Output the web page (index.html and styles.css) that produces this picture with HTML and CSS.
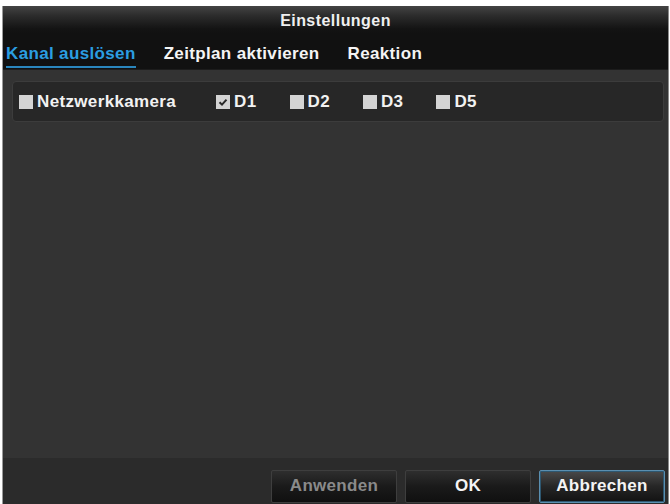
FILE: index.html
```html
<!DOCTYPE html>
<html lang="de">
<head>
<meta charset="utf-8">
<title>Einstellungen</title>
<link rel="stylesheet" href="styles.css">
</head>
<body>
<div class="window">
  <div class="titlebar">Einstellungen</div>
  <div class="tabs">
    <span class="tab active">Kanal auslösen</span>
    <span class="tab">Zeitplan aktivieren</span>
    <span class="tab">Reaktion</span>
  </div>
  <div class="content">
    <div class="panel">
      <label class="cb wide"><span class="box"></span>Netzwerkkamera</label>
      <label class="cb"><span class="box checked"><svg viewBox="0 0 14 14" width="14" height="14"><path d="M3.5 7.2 L6 9.6 L10.5 4.6" fill="none" stroke="#2a2a2a" stroke-width="2"/></svg></span>D1</label>
      <label class="cb"><span class="box"></span>D2</label>
      <label class="cb"><span class="box"></span>D3</label>
      <label class="cb"><span class="box"></span>D5</label>
    </div>
  </div>
  <div class="footer">
    <button class="btn disabled">Anwenden</button>
    <button class="btn">OK</button>
    <button class="btn focus">Abbrechen</button>
  </div>
</div>
</body>
</html>
```
FILE: styles.css
```css
html, body {
  margin: 0;
  padding: 0;
  background: #ffffff;
}
body {
  font-family: "Liberation Sans", Arial, sans-serif;
  width: 670px;
  height: 504px;
  overflow: hidden;
}
.window {
  margin: 6px 0 0 2px;
  width: 667px;
  height: 498px;
  box-sizing: border-box;
  border-left: 1px solid #9a9a9a;
  border-right: 1px solid #8a8a8a;
  display: flex;
  flex-direction: column;
  background: #333333;
}
.titlebar {
  height: 27px;
  flex: none;
  background: linear-gradient(to bottom, #444444 0%, #2c2c2c 35%, #131313 85%, #111111 100%);
  color: #efefef;
  font-weight: bold;
  font-size: 16px;
  letter-spacing: 0.45px;
  display: flex;
  align-items: center;
  justify-content: center;
  padding-top: 3px;
  box-sizing: border-box;
}
.tabs {
  height: 37px;
  flex: none;
  background: #111111;
  display: flex;
  align-items: flex-start;
  gap: 28px;
  padding: 11px 0 0 3px;
  box-sizing: border-box;
  border-bottom: 1px solid #1c1c1c;
}
.tab {
  color: #f4f4f4;
  font-weight: bold;
  font-size: 17px;
  letter-spacing: 0.35px;
  line-height: 20px;
  padding-bottom: 2px;
  border-bottom: 2px solid transparent;
}
.tab.active {
  color: #2b9ee2;
  border-bottom-color: #2a86bd;
}
.content {
  flex: 1;
  padding: 11px 4px 0 9px;
}
.panel {
  height: 41px;
  box-sizing: border-box;
  border: 1px solid #3c3c3c;
  border-radius: 4px;
  background: #272727;
  display: flex;
  align-items: center;
  padding: 1px 0 0 6px;
}
.cb {
  display: flex;
  align-items: center;
  color: #f2f2f2;
  font-weight: bold;
  font-size: 17px;
  letter-spacing: 0.35px;
  gap: 4px;
}
.cb + .cb {
  margin-left: 33px;
}
.cb.wide {
  margin-right: 7px;
}
.box {
  width: 14px;
  height: 14px;
  background: #d4d4d4;
  display: block;
}
.box svg {
  display: block;
}
.footer {
  height: 46px;
  flex: none;
  background: #2b2b2b;
  display: flex;
  justify-content: flex-end;
  align-items: flex-start;
  gap: 8px;
  padding: 12px 3px 0 0;
  box-sizing: border-box;
}
.btn {
  width: 126px;
  height: 33px;
  box-sizing: border-box;
  border: 1px solid #3e3e3e;
  border-radius: 2px;
  background: linear-gradient(to bottom, #2e2e2e 0%, #1a1a1a 50%, #101010 100%);
  color: #f4f4f4;
  font-family: "Liberation Sans", Arial, sans-serif;
  font-weight: bold;
  font-size: 17px;
  letter-spacing: 0.3px;
  padding: 0 0 2px 0;
  margin: 0;
}
.btn.disabled {
  color: #8a8a8a;
}
.btn.focus {
  border: 1px solid #5a8fb0;
  box-shadow: inset 0 0 0 1px #2e5770;
  background: linear-gradient(to bottom, #4a4a4a 0%, #262626 50%, #121212 100%);
}
```
